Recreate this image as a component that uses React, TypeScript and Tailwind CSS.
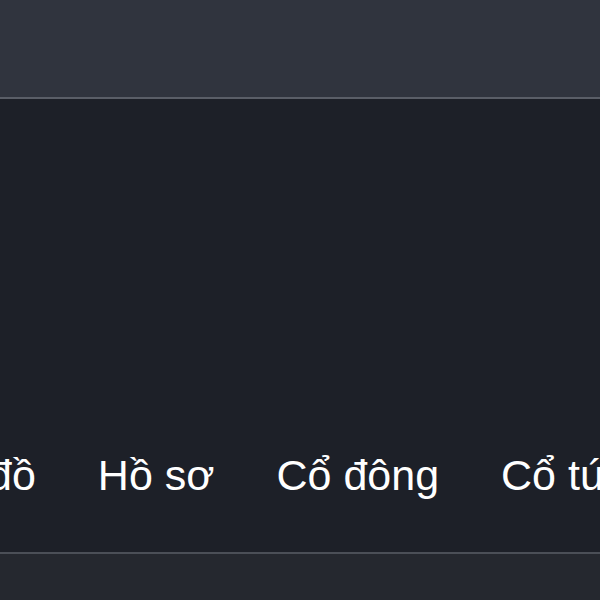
const tabs = ["Biểu đồ", "Hồ sơ", "Cổ đông", "Cổ tức", "Tin tức"]

export default function App() {
  return (
    <div className="flex h-[600px] w-[600px] flex-col overflow-hidden bg-[#1d2028] font-['Liberation_Sans',Arial,sans-serif] text-white">
      {/* header */}
      <div className="h-[97px] shrink-0 bg-[#30343e]" />
      <div className="h-[2px] shrink-0 bg-[#5a5e67]" />

      {/* content + tab strip (scrolled sideways, so ends are clipped) */}
      <div className="flex flex-1 flex-col justify-end">
        <div className="flex gap-[62px] whitespace-nowrap pb-[53px] text-[43px] leading-[48px] -ml-[110px]">
          {tabs.map((t) => (
            <span key={t} className="shrink-0">
              {t}
            </span>
          ))}
        </div>
      </div>

      <div className="h-[2px] shrink-0 bg-[#4b4f57]" />
      <div className="h-[46px] shrink-0 bg-[#25282f]" />
    </div>
  )
}
